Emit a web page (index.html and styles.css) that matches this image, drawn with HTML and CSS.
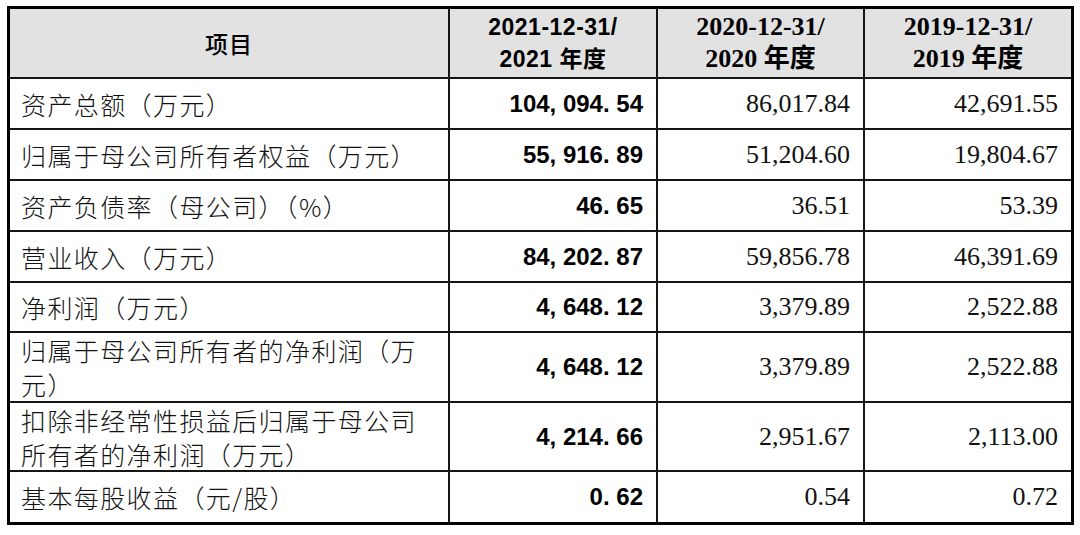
FILE: index.html
```html
<!DOCTYPE html>
<html lang="zh-CN">
<head>
<meta charset="utf-8">
<title>主要财务数据</title>
<link rel="stylesheet" href="styles.css">
</head>
<body>
<div class="sheet">
  <div class="row head">
    <div class="cell label-head">项目</div>
    <div class="cell year year-bold"><span>2021-12-31/</span><span>2021 年度</span></div>
    <div class="cell year"><span>2020-12-31/</span><span>2020 年度</span></div>
    <div class="cell year"><span>2019-12-31/</span><span>2019 年度</span></div>
  </div>
  <div class="row">
    <div class="cell label">资产总额（万元）</div>
    <div class="cell num strong">104, 094. 54</div>
    <div class="cell num">86,017.84</div>
    <div class="cell num">42,691.55</div>
  </div>
  <div class="row">
    <div class="cell label">归属于母公司所有者权益（万元）</div>
    <div class="cell num strong">55, 916. 89</div>
    <div class="cell num">51,204.60</div>
    <div class="cell num">19,804.67</div>
  </div>
  <div class="row">
    <div class="cell label">资产负债率（母公司）（%）</div>
    <div class="cell num strong">46. 65</div>
    <div class="cell num">36.51</div>
    <div class="cell num">53.39</div>
  </div>
  <div class="row">
    <div class="cell label">营业收入（万元）</div>
    <div class="cell num strong">84, 202. 87</div>
    <div class="cell num">59,856.78</div>
    <div class="cell num">46,391.69</div>
  </div>
  <div class="row">
    <div class="cell label">净利润（万元）</div>
    <div class="cell num strong">4, 648. 12</div>
    <div class="cell num">3,379.89</div>
    <div class="cell num">2,522.88</div>
  </div>
  <div class="row">
    <div class="cell label">归属于母公司所有者的净利润（万元）</div>
    <div class="cell num strong">4, 648. 12</div>
    <div class="cell num">3,379.89</div>
    <div class="cell num">2,522.88</div>
  </div>
  <div class="row">
    <div class="cell label">扣除非经常性损益后归属于母公司所有者的净利润（万元）</div>
    <div class="cell num strong">4, 214. 66</div>
    <div class="cell num">2,951.67</div>
    <div class="cell num">2,113.00</div>
  </div>
  <div class="row">
    <div class="cell label">基本每股收益（元/股）</div>
    <div class="cell num strong">0. 62</div>
    <div class="cell num">0.54</div>
    <div class="cell num">0.72</div>
  </div>
</div>
</body>
</html>
```

FILE: styles.css
```css
html, body {
  margin: 0;
  padding: 0;
  background: #ffffff;
}

body {
  font-family: "Noto Sans CJK SC", sans-serif;
  color: #000;
}

.sheet {
  display: grid;
  grid-template-columns: 440px 208px 207px 206px;
  grid-template-rows: 70px 51px 51px 51px 51px 50px 70px 69px 50px;
  width: max-content;
  margin: 6px 0 0 7px;
  border: 3px solid #000;
}

.row {
  display: contents;
}

.cell {
  box-sizing: border-box;
  display: flex;
  align-items: center;
  border-right: 2px solid #161616;
  border-bottom: 2px solid #161616;
  min-width: 0;
}

.cell:last-child {
  border-right: 0;
}

.row:last-child .cell {
  border-bottom: 0;
}

.head .cell {
  background: #e2e2e2;
  justify-content: center;
  text-align: center;
}

.label-head {
  font-family: "Noto Sans CJK SC", sans-serif;
  font-weight: 500;
  font-size: 23px;
  letter-spacing: 1px;
}

.year {
  flex-direction: column;
  font-family: "Liberation Serif", "Noto Sans CJK SC", serif;
  font-weight: 700;
  font-size: 26px;
  line-height: 32px;
}

.year-bold {
  font-family: "Liberation Sans", "Noto Sans CJK SC", sans-serif;
  font-size: 23px;
  letter-spacing: 0.5px;
}

.label {
  font-family: "Noto Sans CJK SC", sans-serif;
  font-weight: 300;
  font-size: 25px;
  letter-spacing: 1.4px;
  line-height: 34px;
  padding: 0 24px 0 11px;
  color: #111;
}

.num {
  justify-content: flex-end;
  padding-right: 13px;
  font-family: "Liberation Serif", serif;
  font-size: 26px;
  color: #111;
}

.num.strong {
  font-family: "Liberation Sans", sans-serif;
  font-weight: 700;
  font-size: 24px;
  color: #000;
  white-space: pre;
}
```
